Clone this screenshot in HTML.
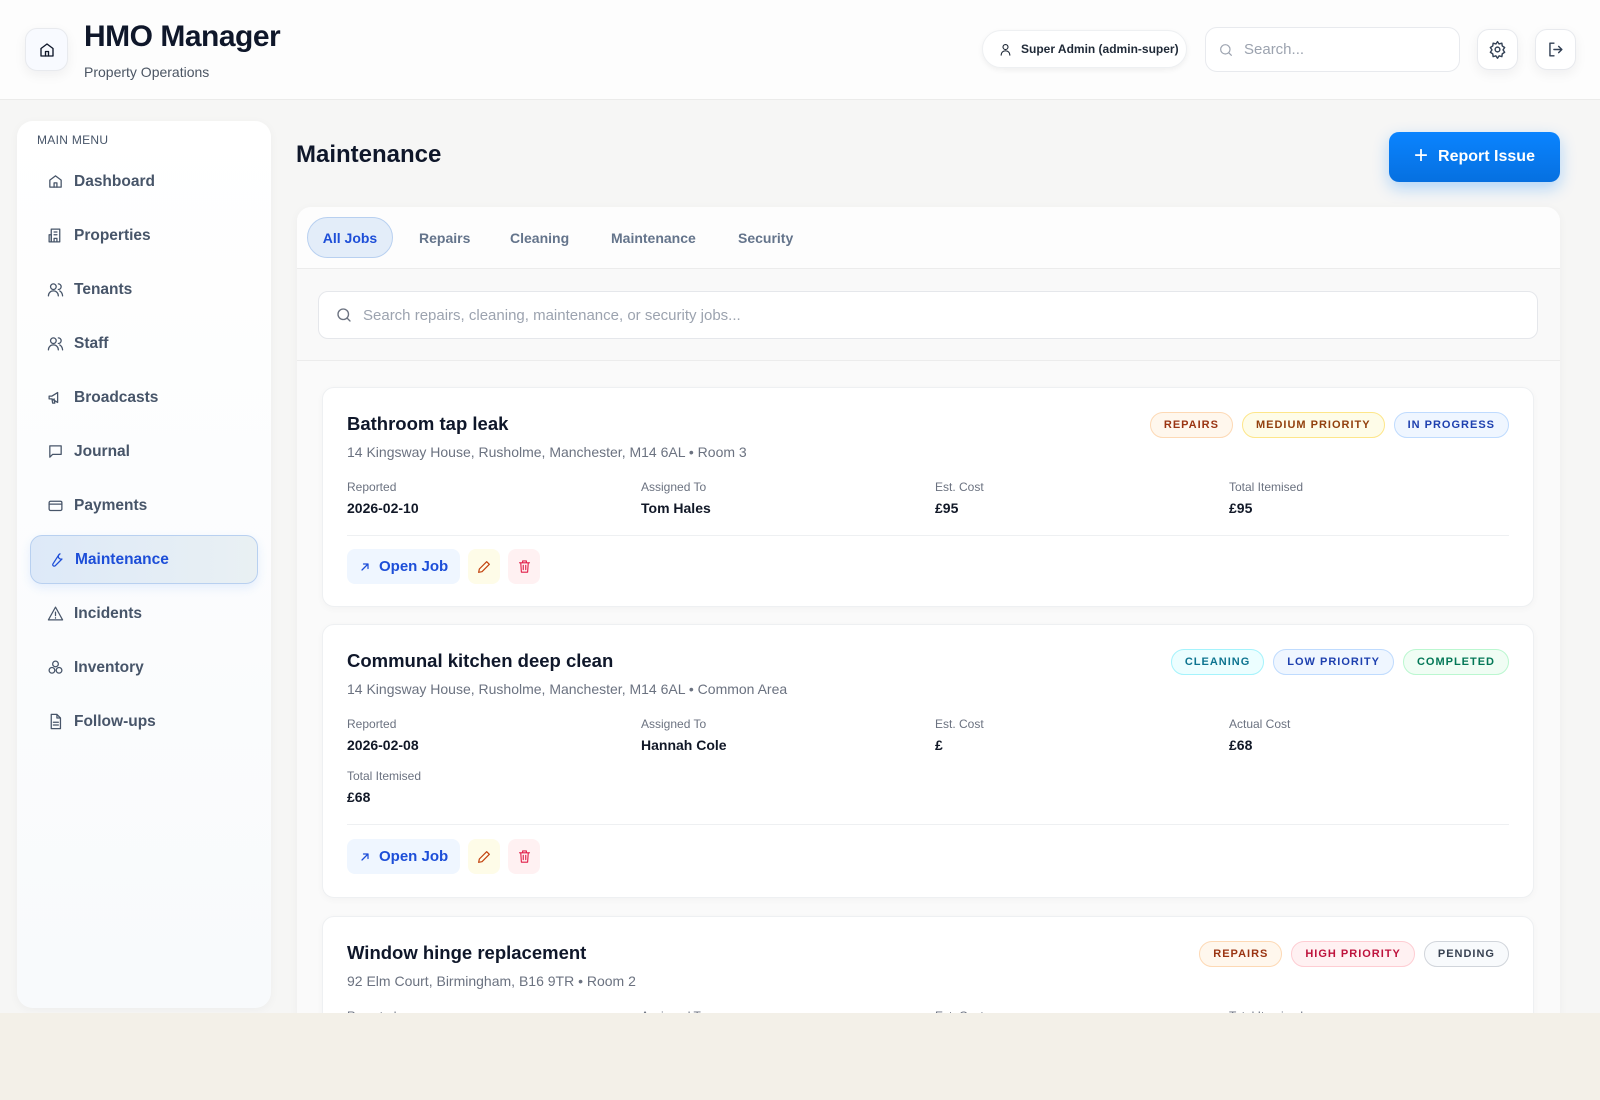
<!DOCTYPE html>
<html><head><meta charset="utf-8"><style>
*{box-sizing:border-box;margin:0;padding:0}
body{width:1600px;height:1100px;background:#f3f0e8;font-family:"Liberation Sans",sans-serif;position:relative;overflow:hidden;color:#0f172a}
.abs{position:absolute}
#app{position:absolute;left:0;top:0;width:1600px;height:1013px;background:#f6f6f5;overflow:hidden}
#hdr{position:absolute;left:0;top:0;width:1600px;height:100px;background:#fdfdfd;border-bottom:1px solid #ebebea}
.ib{position:absolute;background:#fff;border:1px solid #e8eaee;border-radius:12px;box-shadow:0 4px 12px rgba(15,23,42,.06);display:flex;align-items:center;justify-content:center}
svg{fill:none;stroke:currentColor;stroke-width:1.8;stroke-linecap:round;stroke-linejoin:round;flex-shrink:0}
#side{position:absolute;left:17px;top:121px;width:254px;height:887px;background:linear-gradient(#fff,#f8fafc);border-radius:16px;box-shadow:0 2px 10px rgba(0,0,0,.04)}
.nav{position:absolute;left:13px;width:228px;height:49px;display:flex;align-items:center;padding-left:17px;font-size:15.5px;font-weight:bold;color:#475569}
.nav svg{width:17px;height:17px;margin-right:10px}
.nav.act{background:linear-gradient(90deg,#dde9f8,#e9f0f3);border:1px solid #b8d0f0;border-radius:12px;color:#1d4ed8;box-shadow:0 4px 10px rgba(59,130,246,.12)}
#panel{position:absolute;left:297px;top:207px;width:1263px;height:820px;background:#f9f9f9;border-radius:14px;box-shadow:0 2px 10px rgba(0,0,0,.04)}
.tab{position:absolute;top:10px;height:41px;display:flex;align-items:center;font-size:14px;font-weight:bold;color:#64748b}
.card{position:absolute;left:25px;width:1212px;background:#fff;border:1px solid #eef0f2;border-radius:12px;box-shadow:0 2px 8px rgba(0,0,0,.03)}
.ct{position:absolute;left:24px;top:25px;font-size:18.5px;font-weight:bold;color:#0f172a}
.ca{position:absolute;left:24px;top:56px;font-size:14px;color:#6b7280}
.lb{position:absolute;font-size:12px;color:#6b7280}
.vl{position:absolute;font-size:14px;font-weight:bold;color:#111827}
.hr{position:absolute;left:24px;right:24px;height:1px;background:#eef0f2}
.tags{position:absolute;right:24px;top:24px;display:flex;gap:9px}
.tag{height:26px;padding:0 13px;border-radius:13px;font-size:11px;font-weight:bold;letter-spacing:1px;display:flex;align-items:center;border:1px solid}
.t-or{background:#fff7ed;border-color:#fdd9b5;color:#9a3412}
.t-ye{background:#fefce8;border-color:#fde68a;color:#92400e}
.t-bl{background:#eff6ff;border-color:#bfdbfe;color:#1e40af}
.t-cy{background:#ecfeff;border-color:#a5f3fc;color:#0e7490}
.t-gr{background:#f0fdf4;border-color:#bbf7d0;color:#047857}
.t-re{background:#fff1f2;border-color:#fecdd3;color:#be123c}
.t-gy{background:#f8fafc;border-color:#d1d5db;color:#374151}
.btns{position:absolute;left:24px;display:flex;gap:8px}
.ob{height:35px;padding:0 12px;background:#eff6ff;border-radius:8px;color:#1d4ed8;font-size:15px;font-weight:bold;display:flex;align-items:center;gap:8px}
.sq{width:32px;height:35px;border-radius:8px;display:flex;align-items:center;justify-content:center}
</style></head><body>
<div id="app">
<div id="hdr">
 <div class="ib" style="left:25px;top:28px;width:43px;height:43px;background:#f8faff"><svg width="18" height="18" viewBox="0 0 24 24"><path d="M4 10l8-6 8 6v10H4z"/><path d="M10 20v-6h4v6"/></svg></div>
 <div class="abs" style="left:84px;top:20px;font-size:30px;font-weight:bold;letter-spacing:-.5px">HMO Manager</div>
 <div class="abs" style="left:84px;top:64px;font-size:14px;color:#4b5563">Property Operations</div>
 <div class="abs" style="left:982px;top:30px;width:205px;height:38px;background:#fff;border-radius:19px;box-shadow:0 2px 6px rgba(0,0,0,.06);border:1px solid #eef0f2;display:flex;align-items:center;padding-left:15px;font-size:12px;font-weight:bold;color:#1f2937"><svg width="15" height="15" viewBox="0 0 24 24" style="margin-right:8px"><circle cx="12" cy="8" r="4"/><path d="M5 21c0-4 3-7 7-7s7 3 7 7"/></svg>Super Admin (admin-super)</div>
 <div class="abs" style="left:1205px;top:27px;width:255px;height:45px;background:#fff;border:1px solid #e8eaee;border-radius:12px;display:flex;align-items:center;padding-left:12px;font-size:15px;color:#9ca3af"><svg width="16" height="16" viewBox="0 0 24 24" style="margin-right:10px"><circle cx="11" cy="11" r="7"/><path d="M20 20l-4-4"/></svg>Search...</div>
 <div class="ib" style="left:1477px;top:29px;width:41px;height:41px;color:#334155"><svg width="19" height="19" viewBox="0 0 24 24"><circle cx="12" cy="12" r="3"/><path d="M12 2l2 3 3.5-1 .5 3.5 3 2-2 3 2 3-3 2-.5 3.5-3.5-1-2 3-2-3-3.5 1-.5-3.5-3-2 2-3-2-3 3-2 .5-3.5 3.5 1z"/></svg></div>
 <div class="ib" style="left:1535px;top:29px;width:41px;height:41px;color:#334155"><svg width="19" height="19" viewBox="0 0 24 24"><path d="M10 4H5v16h5"/><path d="M10 12h10M16 8l4 4-4 4"/></svg></div>
</div>
<div id="side">
 <div class="abs" style="left:20px;top:12px;font-size:12px;color:#475569;letter-spacing:.3px">MAIN MENU</div>
 <div class="nav" style="top:36px"><svg viewBox="0 0 24 24"><path d="M4 10l8-6 8 6v10H4z"/><path d="M10 20v-6h4v6"/></svg>Dashboard</div>
 <div class="nav" style="top:90px"><svg viewBox="0 0 24 24"><rect x="6" y="3" width="12" height="18"/><path d="M3 11h3v10H3zM10 7h4M10 11h4M10 21v-5h4v5"/></svg>Properties</div>
 <div class="nav" style="top:144px"><svg viewBox="0 0 24 24"><circle cx="9" cy="8" r="4"/><path d="M2 21c0-4 3-7 7-7s7 3 7 7M16 4a4 4 0 010 8M22 21c0-3-2-6-4-7"/></svg>Tenants</div>
 <div class="nav" style="top:198px"><svg viewBox="0 0 24 24"><circle cx="9" cy="8" r="4"/><path d="M2 21c0-4 3-7 7-7s7 3 7 7M16 4a4 4 0 010 8M22 21c0-3-2-6-4-7"/></svg>Staff</div>
 <div class="nav" style="top:252px"><svg viewBox="0 0 24 24"><path d="M3 10v4h4l8 5V5L7 10z M7 14l1 6h3l-1-6"/></svg>Broadcasts</div>
 <div class="nav" style="top:306px"><svg viewBox="0 0 24 24"><path d="M4 4h16v12H8l-4 4z"/></svg>Journal</div>
 <div class="nav" style="top:360px"><svg viewBox="0 0 24 24"><rect x="3" y="6" width="18" height="13" rx="2"/><path d="M3 10h18"/></svg>Payments</div>
 <div class="nav act" style="top:414px"><svg viewBox="0 0 24 24"><path d="M14.7 6.3a4 4 0 005 5l-9.4 9.4a2 2 0 01-3-3z M14.7 6.3L17 4a4 4 0 00-2.3 2.3"/></svg>Maintenance</div>
 <div class="nav" style="top:468px"><svg viewBox="0 0 24 24"><path d="M12 3l10 18H2z M12 10v5M12 18v.5"/></svg>Incidents</div>
 <div class="nav" style="top:522px"><svg viewBox="0 0 24 24"><circle cx="12" cy="7" r="4"/><circle cx="7" cy="16" r="4"/><circle cx="17" cy="16" r="4"/></svg>Inventory</div>
 <div class="nav" style="top:576px"><svg viewBox="0 0 24 24"><path d="M6 2h8l5 5v15H6z M14 2v5h5 M9 13h7M9 17h7"/></svg>Follow-ups</div>
</div>
<div class="abs" style="left:296px;top:141px;font-size:24px;font-weight:bold">Maintenance</div>
<div class="abs" style="left:1389px;top:132px;width:171px;height:50px;background:linear-gradient(#0a84ff,#0670e0);border-radius:10px;box-shadow:0 6px 16px rgba(10,132,255,.3);color:#fff;display:flex;align-items:center;justify-content:center;font-size:16px;font-weight:bold"><span style="font-size:24px;font-weight:normal;margin-right:10px;margin-top:-3px">+</span>Report Issue</div>
<div id="panel">
 <div class="abs" style="left:0;top:0;width:1263px;height:62px;background:#fdfdfd;border-bottom:1px solid #ececec;border-radius:14px 14px 0 0"></div>
 <div class="tab" style="left:10px;width:86px;justify-content:center;background:#e3edf9;border:1px solid #b8d0f0;border-radius:21px;color:#1d4ed8">All Jobs</div>
 <div class="tab" style="left:122px">Repairs</div>
 <div class="tab" style="left:213px">Cleaning</div>
 <div class="tab" style="left:314px">Maintenance</div>
 <div class="tab" style="left:441px">Security</div>
 <div class="abs" style="left:21px;top:84px;width:1220px;height:48px;background:#fff;border:1px solid #e5e7eb;border-radius:10px;display:flex;align-items:center;padding-left:16px;font-size:15px;color:#9ca3af"><svg width="18" height="18" viewBox="0 0 24 24" style="margin-right:10px;color:#6b7280"><circle cx="11" cy="11" r="7"/><path d="M20 20l-4-4"/></svg>Search repairs, cleaning, maintenance, or security jobs...</div>
 <div class="abs" style="left:0;top:153px;width:1263px;height:1px;background:#ececec"></div>
 <div class="abs" style="left:0;top:154px;width:1263px;height:700px;background:#fafafa"></div>

 <div class="card" style="top:180px;height:220px">
  <div class="ct">Bathroom tap leak</div>
  <div class="ca">14 Kingsway House, Rusholme, Manchester, M14 6AL • Room 3</div>
  <div class="tags"><div class="tag t-or">REPAIRS</div><div class="tag t-ye">MEDIUM PRIORITY</div><div class="tag t-bl">IN PROGRESS</div></div>
  <div class="lb" style="left:24px;top:92px">Reported</div><div class="vl" style="left:24px;top:112px">2026-02-10</div>
  <div class="lb" style="left:318px;top:92px">Assigned To</div><div class="vl" style="left:318px;top:112px">Tom Hales</div>
  <div class="lb" style="left:612px;top:92px">Est. Cost</div><div class="vl" style="left:612px;top:112px">£95</div>
  <div class="lb" style="left:906px;top:92px">Total Itemised</div><div class="vl" style="left:906px;top:112px">£95</div>
  <div class="hr" style="top:147px"></div>
  <div class="btns" style="top:161px"><div class="ob"><svg width="12" height="12" viewBox="0 0 24 24" style="stroke-width:2.5"><path d="M6 18L18 6M9 6h9v9"/></svg>Open Job</div><div class="sq" style="background:#fefce8;color:#c2410c"><svg width="16" height="16" viewBox="0 0 24 24"><path d="M4 20l1-5L16 4l4 4L9 19z"/></svg></div><div class="sq" style="background:#fff1f2;color:#e11d48"><svg width="15" height="15" viewBox="0 0 24 24"><path d="M4 6h16M9 6V3h6v3M6 6l1 15h10l1-15M10 10v7M14 10v7"/></svg></div></div>
 </div>

 <div class="card" style="top:417px;height:274px">
  <div class="ct">Communal kitchen deep clean</div>
  <div class="ca">14 Kingsway House, Rusholme, Manchester, M14 6AL • Common Area</div>
  <div class="tags"><div class="tag t-cy">CLEANING</div><div class="tag t-bl">LOW PRIORITY</div><div class="tag t-gr">COMPLETED</div></div>
  <div class="lb" style="left:24px;top:92px">Reported</div><div class="vl" style="left:24px;top:112px">2026-02-08</div>
  <div class="lb" style="left:318px;top:92px">Assigned To</div><div class="vl" style="left:318px;top:112px">Hannah Cole</div>
  <div class="lb" style="left:612px;top:92px">Est. Cost</div><div class="vl" style="left:612px;top:112px">£</div>
  <div class="lb" style="left:906px;top:92px">Actual Cost</div><div class="vl" style="left:906px;top:112px">£68</div>
  <div class="lb" style="left:24px;top:144px">Total Itemised</div><div class="vl" style="left:24px;top:164px">£68</div>
  <div class="hr" style="top:199px"></div>
  <div class="btns" style="top:214px"><div class="ob"><svg width="12" height="12" viewBox="0 0 24 24" style="stroke-width:2.5"><path d="M6 18L18 6M9 6h9v9"/></svg>Open Job</div><div class="sq" style="background:#fefce8;color:#c2410c"><svg width="16" height="16" viewBox="0 0 24 24"><path d="M4 20l1-5L16 4l4 4L9 19z"/></svg></div><div class="sq" style="background:#fff1f2;color:#e11d48"><svg width="15" height="15" viewBox="0 0 24 24"><path d="M4 6h16M9 6V3h6v3M6 6l1 15h10l1-15M10 10v7M14 10v7"/></svg></div></div>
 </div>

 <div class="card" style="top:709px;height:220px">
  <div class="ct">Window hinge replacement</div>
  <div class="ca">92 Elm Court, Birmingham, B16 9TR • Room 2</div>
  <div class="tags"><div class="tag t-or">REPAIRS</div><div class="tag t-re">HIGH PRIORITY</div><div class="tag t-gy">PENDING</div></div>
  <div class="lb" style="left:24px;top:92px">Reported</div>
  <div class="lb" style="left:318px;top:92px">Assigned To</div>
  <div class="lb" style="left:612px;top:92px">Est. Cost</div>
  <div class="lb" style="left:906px;top:92px">Total Itemised</div>
 </div>
</div>
</div>
</body></html>
